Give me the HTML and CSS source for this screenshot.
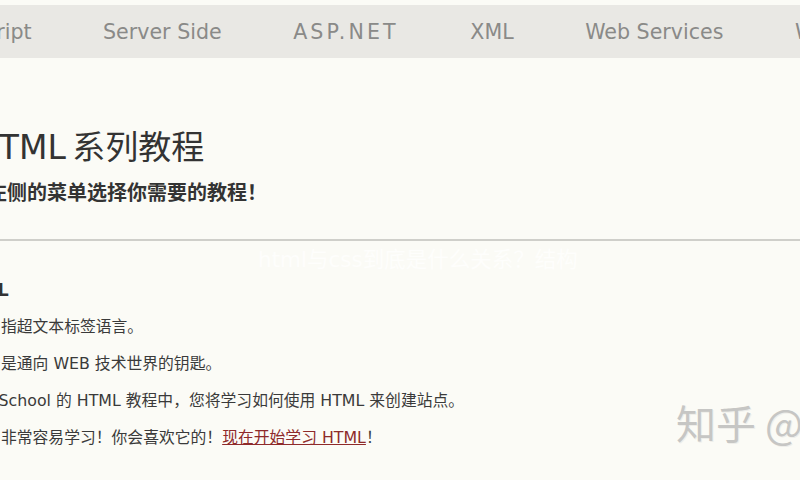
FILE: index.html
```html
<!DOCTYPE html>
<html lang="zh-CN">
<head>
<meta charset="utf-8">
<title>HTML 系列教程</title>
<link rel="stylesheet" href="styles.css">
</head>
<body>
<nav class="nav">
  <span class="nav-item">JavaScript</span>
  <span class="nav-item">Server Side</span>
  <span class="nav-item spaced">ASP.NET</span>
  <span class="nav-item">XML</span>
  <span class="nav-item">Web Services</span>
  <span class="nav-item">WAP</span>
</nav>
<main class="main">
  <h1 class="title">HTML 系列教程</h1>
  <p class="subtitle">在左侧的菜单选择你需要的教程！</p>
  <hr class="rule">
  <div class="ghost">html与css到底是什么关系？结构</div>
  <h2 class="section">HTML</h2>
  <p class="para">HTML 指超文本标签语言。</p>
  <p class="para">HTML 是通向 WEB 技术世界的钥匙。</p>
  <p class="para">在 W3School 的 HTML 教程中，您将学习如何使用 HTML 来创建站点。</p>
  <p class="para">HTML 非常容易学习！你会喜欢它的！<a class="link" href="#">现在开始学习 HTML</a>！</p>
</main>
<div class="watermark">知乎 @W3School</div>
</body>
</html>
```

FILE: styles.css
```css
html, body {
  margin: 0;
  padding: 0;
}
body {
  width: 800px;
  height: 480px;
  overflow: hidden;
  background: #fbfbf6;
  font-family: "DejaVu Sans", "Noto Sans CJK SC", sans-serif;
  color: #333;
  position: relative;
}
.nav {
  margin-top: 5px;
  height: 53px;
  background: #e9e8e4;
  display: flex;
  align-items: center;
  gap: 71.5px;
  white-space: nowrap;
  overflow: hidden;
}
.nav-item {
  font-size: 20.6px;
  color: #8a8a88;
  flex: none;
}
.nav-item:first-child {
  margin-left: -71.7px;
}
.spaced {
  letter-spacing: 3.1px;
}
.main {
  margin-left: -48px;
  display: flex;
  flex-direction: column;
  align-items: flex-start;
}
.title {
  margin: 70px 0 0 22px;
  font-size: 33px;
  line-height: 40px;
  font-weight: normal;
  color: #333;
  word-spacing: -4px;
}
.subtitle {
  margin: 13px 0 0 15px;
  font-size: 20px;
  line-height: 24px;
  font-weight: bold;
  color: #333;
}
.rule {
  align-self: stretch;
  margin: 34px 0 0 48px;
  border: 0;
  border-top: 2px solid #cfcfca;
  height: 0;
}
.ghost {
  margin: 8px 0 0 306px;
  font-size: 21.5px;
  line-height: 22px;
  color: #fefefc;
  white-space: nowrap;
}
.section {
  margin: 8px 0 0 0;
  font-size: 18px;
  line-height: 22px;
  font-weight: bold;
  color: #333;
}
.para {
  margin: 15px 0 0 0;
  font-size: 15.8px;
  line-height: 22px;
  color: #3a3a3a;
  white-space: nowrap;
}
.link {
  color: #8e2a2a;
  text-decoration: underline;
}
.watermark {
  position: absolute;
  left: 676px;
  top: 398px;
  font-family: "Noto Sans CJK SC", sans-serif;
  font-size: 40px;
  line-height: 48px;
  color: #c6c6c4;
  white-space: nowrap;
  text-shadow: 1px 1px 0 #eeeeea;
}
```
